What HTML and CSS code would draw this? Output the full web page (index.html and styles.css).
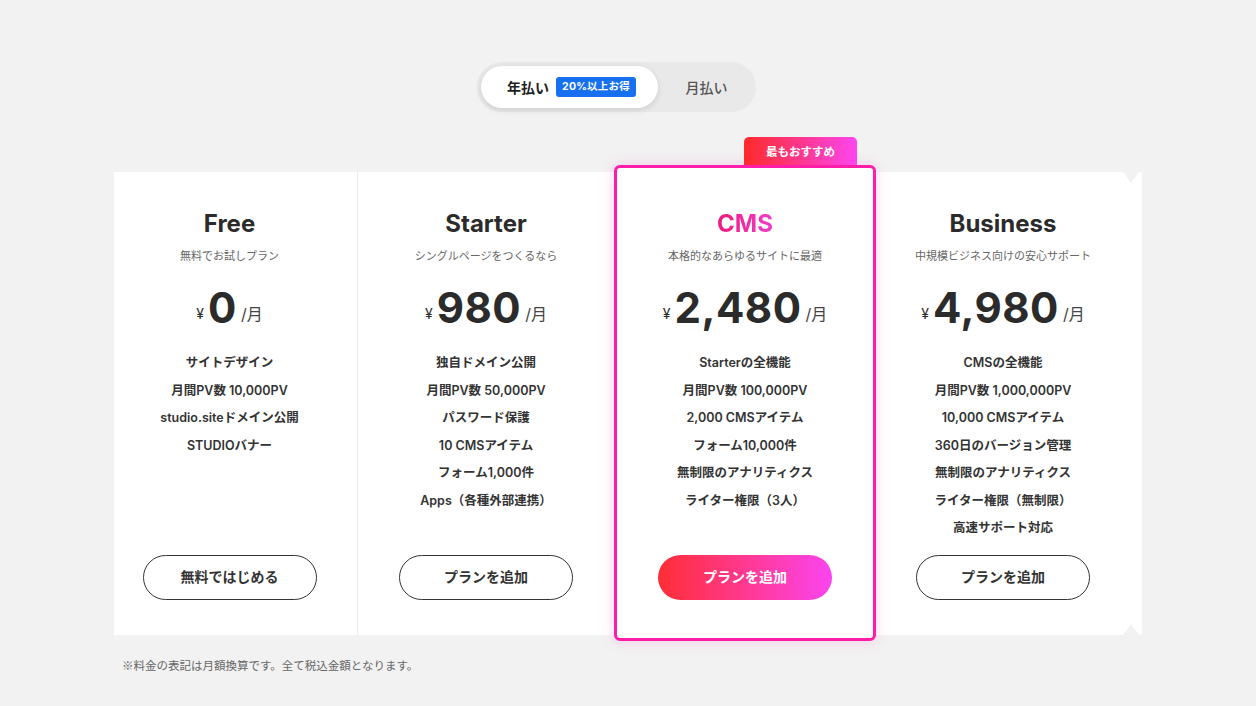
FILE: index.html
```html
<!DOCTYPE html>
<html lang="ja">
<head>
<meta charset="utf-8">
<title>Pricing</title>
<link rel="stylesheet" href="styles.css">
</head>
<body>
<main class="page">
  <div class="toggle">
    <div class="toggle-item active">年払い <span class="save">20%以上お得</span></div>
    <div class="toggle-item">月払い</div>
  </div>

  <div class="plans">
    <section class="plan plan-free">
      <h2 class="plan-name">Free</h2>
      <p class="plan-sub">無料でお試しプラン</p>
      <div class="price"><span class="yen">¥</span><span class="num">0</span><span class="per">/月</span></div>
      <ul class="features">
        <li>サイトデザイン</li>
        <li>月間PV数 10,000PV</li>
        <li>studio.siteドメイン公開</li>
        <li>STUDIOバナー</li>
      </ul>
      <a class="btn">無料ではじめる</a>
    </section>
    <section class="plan plan-starter">
      <h2 class="plan-name">Starter</h2>
      <p class="plan-sub">シングルページをつくるなら</p>
      <div class="price"><span class="yen">¥</span><span class="num">980</span><span class="per">/月</span></div>
      <ul class="features">
        <li>独自ドメイン公開</li>
        <li>月間PV数 50,000PV</li>
        <li>パスワード保護</li>
        <li>10 CMSアイテム</li>
        <li>フォーム1,000件</li>
        <li>Apps（各種外部連携）</li>
      </ul>
      <a class="btn">プランを追加</a>
    </section>
    <section class="plan plan-cms">
      <div class="ribbon">最もおすすめ</div>
      <h2 class="plan-name cms-name">CMS</h2>
      <p class="plan-sub">本格的なあらゆるサイトに最適</p>
      <div class="price"><span class="yen">¥</span><span class="num">2,480</span><span class="per">/月</span></div>
      <ul class="features">
        <li>Starterの全機能</li>
        <li>月間PV数 100,000PV</li>
        <li>2,000 CMSアイテム</li>
        <li>フォーム10,000件</li>
        <li>無制限のアナリティクス</li>
        <li>ライター権限（3人）</li>
      </ul>
      <a class="btn btn-primary">プランを追加</a>
    </section>
    <section class="plan plan-business">
      <h2 class="plan-name">Business</h2>
      <p class="plan-sub">中規模ビジネス向けの安心サポート</p>
      <div class="price"><span class="yen">¥</span><span class="num">4,980</span><span class="per">/月</span></div>
      <ul class="features">
        <li>CMSの全機能</li>
        <li>月間PV数 1,000,000PV</li>
        <li>10,000 CMSアイテム</li>
        <li>360日のバージョン管理</li>
        <li>無制限のアナリティクス</li>
        <li>ライター権限（無制限）</li>
        <li>高速サポート対応</li>
      </ul>
      <a class="btn">プランを追加</a>
    </section>
    <div class="edge"></div>
  </div>

  <p class="note">※料金の表記は月額換算です。全て税込金額となります。</p>
</main>
</body>
</html>
```

FILE: styles.css
```css
* { box-sizing: border-box; }
html, body { margin: 0; padding: 0; }
body {
  background: #f2f2f2;
  font-family: "Inter", "Noto Sans CJK JP", sans-serif;
  color: #333;
  width: 1256px;
  height: 706px;
  overflow: hidden;
}
.page {
  padding-top: 62px;
  display: flex;
  flex-direction: column;
  align-items: flex-start;
}
.toggle {
  margin-left: 477px;
  width: 279px;
  height: 50px;
  padding: 4px;
  border-radius: 25px;
  background: #e9e9e9;
  display: flex;
  align-items: center;
}
.toggle-item {
  height: 42px;
  display: flex;
  align-items: center;
  justify-content: center;
  font-size: 14px;
  font-weight: 500;
  color: #555;
  flex: 1;
  padding-left: 3px;
}
.toggle-item.active {
  flex: 0 0 177px;
  background: #fff;
  border-radius: 21px;
  color: #222;
  font-weight: 700;
  box-shadow: 0 2px 6px rgba(0,0,0,0.12);
  gap: 7px;
  padding-left: 4px;
}
.save {
  background: #1670f0;
  color: #fff;
  font-size: 10.5px;
  font-weight: 700;
  padding: 0 6px;
  height: 20px;
  line-height: 20px;
  border-radius: 3px;
  letter-spacing: 0.2px;
}
.plans {
  margin-top: 60px;
  margin-left: 114px;
  display: flex;
  background: #fff;
  height: 463px;
  position: relative;
}
.plan {
  display: flex;
  flex-direction: column;
  align-items: center;
  padding: 36px 0 35px;
  position: relative;
}
.plan-free { width: 244px; padding-right: 12px; border-right: 1px solid #ececec; }
.plan-starter { width: 256px; }
.plan-cms {
  width: 262px;
  margin: -7px 0 -6px;
  padding: 40px 0 38px;
  border: 3px solid #ff1ca8;
  border-radius: 6px;
  background: #fff;
  box-shadow: 0 0 14px rgba(255, 60, 190, 0.22);
  z-index: 2;
}
.plan-business { width: 254px; }
.edge { width: 12px; position: relative; }
.edge::before, .edge::after {
  content: "";
  position: absolute;
  left: -7px;
  width: 0; height: 0;
  border-left: 8px solid transparent;
  border-right: 8px solid transparent;
}
.edge::before { top: 0; border-top: 11px solid #f2f2f2; }
.edge::after { bottom: 0; border-bottom: 11px solid #f2f2f2; }

.ribbon {
  position: absolute;
  top: -31px;
  right: 16px;
  width: 113px;
  height: 28px;
  border-radius: 5px 5px 0 0;
  background: linear-gradient(90deg, #ff2a2a 0%, #ff3aa0 60%, #ff45f0 100%);
  color: #fff;
  font-size: 11.5px;
  font-weight: 700;
  display: flex;
  align-items: center;
  justify-content: center;
  padding-bottom: 1px;
}
.plan-name {
  margin: 0;
  font-size: 24px;
  line-height: 32px;
  font-weight: 700;
  color: #2b2b2b;
}
.cms-name {
  background: linear-gradient(90deg, #ee1a7e, #f23cc8);
  -webkit-background-clip: text;
  background-clip: text;
  color: transparent;
}
.plan-sub {
  margin: 8px 0 0;
  font-size: 11px;
  line-height: 16px;
  color: #666;
}
.price {
  margin-top: 19px;
  height: 50px;
  display: flex;
  align-items: center;
  color: #2b2b2b;
}
.yen { font-size: 14px; margin: 10px 4px 0 0; }
.num { font-size: 42px; font-weight: 700; line-height: 50px; letter-spacing: 0.5px; }
.per { font-size: 16px; margin: 10px 0 0 4px; color: #444; }
.features {
  list-style: none;
  margin: 16px 0 0;
  padding: 0;
  text-align: center;
}
.features li {
  font-size: 12.5px;
  line-height: 27.5px;
  font-weight: 600;
  color: #333;
}
.btn {
  margin-top: auto;
  width: 174px;
  height: 45px;
  border: 1px solid #333;
  border-radius: 23px;
  display: flex;
  align-items: center;
  justify-content: center;
  font-size: 14px;
  font-weight: 700;
  color: #333;
  background: #fff;
  padding-bottom: 3px;
}
.btn-primary {
  border: none;
  color: #fff;
  background: linear-gradient(90deg, #ff2e36 0%, #ff3a9a 55%, #fb44f0 100%);
}
.note {
  margin: 22px 0 0 122px;
  font-family: "Noto Sans CJK JP", sans-serif;
  font-size: 11.5px;
  color: #666;
}
```
